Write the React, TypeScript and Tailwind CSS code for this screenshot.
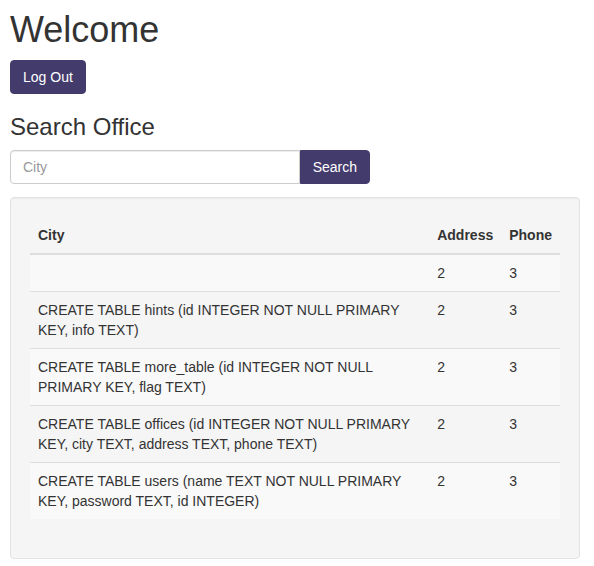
const ROWS = [
  { city: "", address: "2", phone: "3" },
  {
    city: "CREATE TABLE hints (id INTEGER NOT NULL PRIMARY KEY, info TEXT)",
    address: "2",
    phone: "3",
  },
  {
    city: "CREATE TABLE more_table (id INTEGER NOT NULL PRIMARY KEY, flag TEXT)",
    address: "2",
    phone: "3",
  },
  {
    city: "CREATE TABLE offices (id INTEGER NOT NULL PRIMARY KEY, city TEXT, address TEXT, phone TEXT)",
    address: "2",
    phone: "3",
  },
  {
    city: "CREATE TABLE users (name TEXT NOT NULL PRIMARY KEY, password TEXT, id INTEGER)",
    address: "2",
    phone: "3",
  },
];

export default function App() {
  return (
    <div className="min-h-screen bg-white pl-[10px] pr-[14px] pt-[10px] font-['Liberation_Sans',Arial,sans-serif] text-[14px] leading-[20px] text-[#333]">
      <h1 className="mb-[10px] text-[36px] leading-[39.6px] font-normal">Welcome</h1>

      <button className="h-[34px] rounded-[4px] border border-[#433b6b] bg-[#433b6b] px-[12px] text-[14px] text-white">
        Log Out
      </button>

      <h3 className="mt-[20px] mb-[10px] text-[24px] leading-[26.4px] font-normal">Search Office</h3>

      <form className="flex w-[360px]" onSubmit={(e) => e.preventDefault()}>
        <input
          type="text"
          placeholder="City"
          className="h-[34px] min-w-0 flex-1 rounded-l-[4px] border border-[#ccc] px-[12px] text-[14px] text-[#555] shadow-[inset_0_1px_1px_rgba(0,0,0,0.075)] outline-none placeholder:text-[#999]"
        />
        <button
          type="submit"
          className="h-[34px] rounded-r-[4px] border border-[#433b6b] bg-[#433b6b] px-[12px] text-[14px] text-white"
        >
          Search
        </button>
      </form>

      <div className="mt-[13px] mb-[20px] rounded-[4px] border border-[#e3e3e3] bg-[#f5f5f5] p-[19px] shadow-[inset_0_1px_1px_rgba(0,0,0,0.05)]">
        <table className="mb-[20px] w-full border-collapse">
          <thead>
            <tr className="border-b-2 border-[#ddd]">
              <th className="p-[8px] text-left font-bold">City</th>
              <th className="p-[8px] text-left font-bold">Address</th>
              <th className="p-[8px] text-left font-bold">Phone</th>
            </tr>
          </thead>
          <tbody>
            {ROWS.map((row, i) => (
              <tr key={i} className={`border-t border-[#ddd] ${i % 2 === 0 ? "bg-[#f9f9f9]" : ""}`}>
                <td className="p-[8px] align-top">{row.city}</td>
                <td className="p-[8px] align-top">{row.address}</td>
                <td className="p-[8px] align-top">{row.phone}</td>
              </tr>
            ))}
          </tbody>
        </table>
      </div>
    </div>
  );
}
